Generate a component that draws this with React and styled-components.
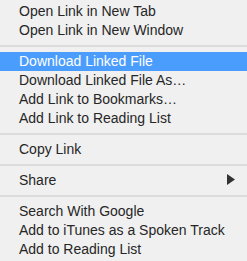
import React from 'react'
import styled, { createGlobalStyle } from 'styled-components'

const GlobalStyle = createGlobalStyle`
  html, body {
    margin: 0;
    padding: 0;
    background: #f0f0f0;
  }
`

const sections = [
  ['Open Link in New Tab', 'Open Link in New Window'],
  ['Download Linked File', 'Download Linked File As…', 'Add Link to Bookmarks…', 'Add Link to Reading List'],
  ['Copy Link'],
  ['Share'],
  ['Search With Google', 'Add to iTunes as a Spoken Track', 'Add to Reading List'],
]

const active = 'Download Linked File'
const withSubmenu = ['Share']

function App () {
  return (
    <>
      <GlobalStyle />
      <Menu>
        {sections.map((items, i) => (
          <React.Fragment key={`sec${i}`}>
            {i > 0 && <Separator />}
            {items.map(item => (
              <Item key={item} $active={item === active}>
                {item}
                {withSubmenu.includes(item) && (
                  <Arrow viewBox="0 0 8 11">
                    <path d="M0 0 L8 5.5 L0 11 Z" fill="#333" />
                  </Arrow>
                )}
              </Item>
            ))}
          </React.Fragment>
        ))}
      </Menu>
    </>
  )
}

export default App

const Menu = styled.div`
  width: 247px;
  height: 261px;
  box-sizing: border-box;
  padding: 2px 0;
  background: #f0f0f0;
  display: flex;
  flex-direction: column;
  font-family: "Liberation Sans", Arial, sans-serif;
  font-size: 14px;
`

const Item = styled.div`
  position: relative;
  height: 19px;
  line-height: 19px;
  padding-left: 19px;
  white-space: nowrap;
  color: ${p => (p.$active ? '#ffffff' : '#262626')};
  background: ${p => (p.$active ? '#4b9dfd' : 'transparent')};
`

const Separator = styled.div`
  height: 12px;
  flex-shrink: 0;
  display: flex;
  align-items: flex-start;
  &::after {
    content: '';
    margin-top: 5px;
    width: 100%;
    height: 2px;
    background: #dcdcdc;
  }
`

const Arrow = styled.svg`
  position: absolute;
  left: 227px;
  top: 3px;
  width: 8px;
  height: 11px;
`
